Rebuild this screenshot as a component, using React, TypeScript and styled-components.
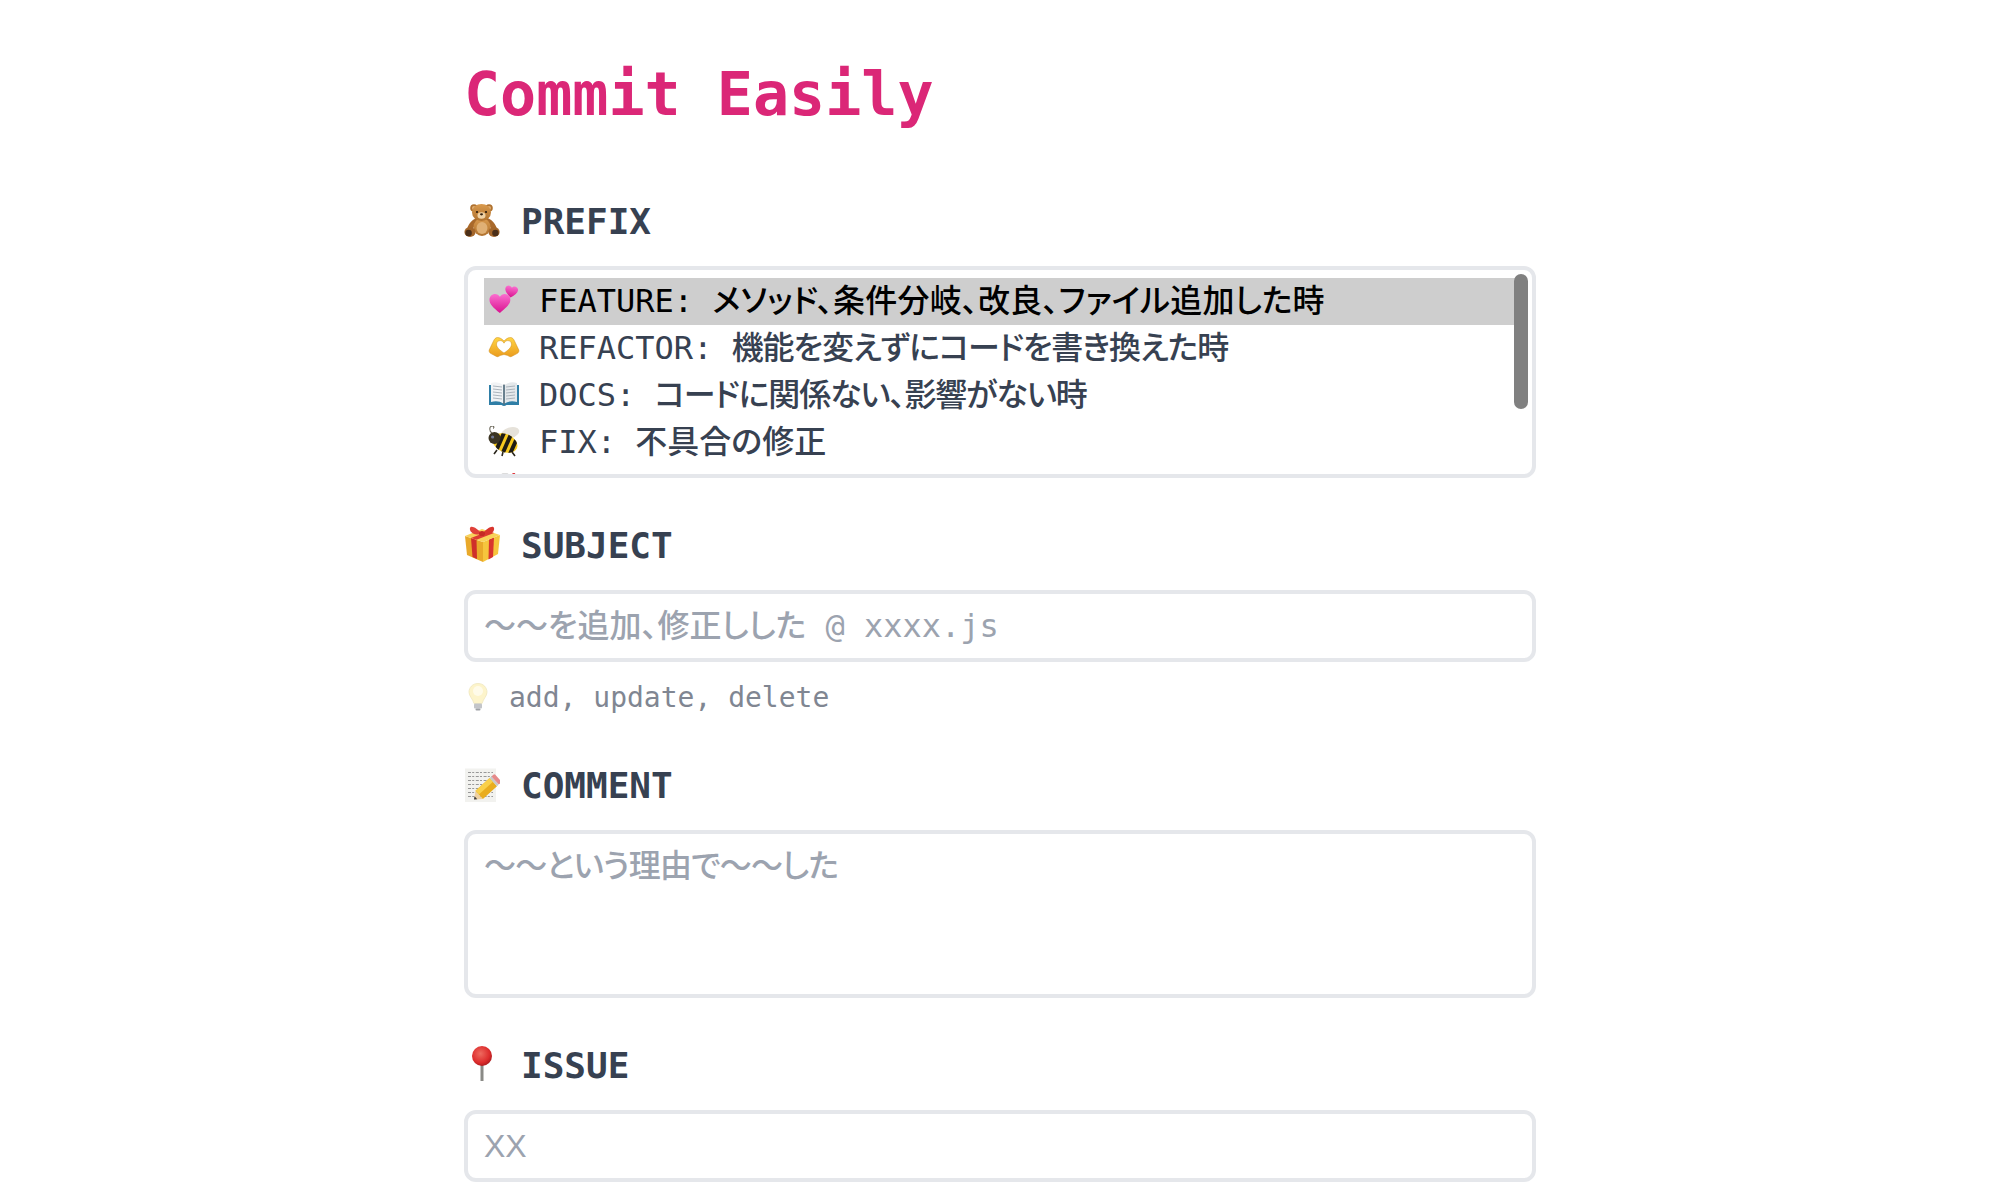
import * as React from 'react';
import styled, { createGlobalStyle } from 'styled-components';

const MONO = `'DejaVu Sans Mono', 'Noto Sans CJK JP', monospace`;

const GlobalStyle = createGlobalStyle`
	html, body {
		margin: 0;
		padding: 0;
		background: #fff;
		font-family: ${MONO};
		font-feature-settings: "palt";
	}
	* {
		box-sizing: border-box;
	}
`;

const Page = styled.main`
	width: 1072px;
	margin-left: 464px;
	padding: 54px 0 18px;
`;

const Title = styled.h1`
	margin: 0 0 63px;
	font-size: 60px;
	line-height: 80px;
	font-weight: 700;
	color: #db2777;
`;

const Field = styled.section`
	margin-bottom: 43px;
	&:last-child {
		margin-bottom: 0;
	}
`;

const Label = styled.label`
	display: flex;
	align-items: center;
	gap: 21px;
	height: 48px;
	margin-bottom: 21px;
	font-size: 36px;
	font-weight: 700;
	color: #374151;
`;

const Glyph = styled.svg<{ $size: number }>`
	flex: none;
	display: block;
	width: ${(p) => p.$size}px;
	height: ${(p) => p.$size}px;
	margin-top: -2px;
`;

const RowGlyph = styled(Glyph)`
	margin-top: -1px;
`;

const ListBox = styled.div`
	position: relative;
	height: 212px;
	padding: 8px 16px 0;
	border: 4px solid #e5e7eb;
	border-radius: 12px;
	overflow: hidden;
`;

const Option = styled.div<{ $selected?: boolean }>`
	display: flex;
	align-items: center;
	gap: 19px;
	height: 47px;
	padding-left: 4px;
	font-size: 32px;
	font-weight: 500;
	white-space: pre;
	color: ${(p) => (p.$selected ? '#000' : '#374151')};
	background: ${(p) => (p.$selected ? '#cecece' : 'transparent')};
`;

const OptionText = styled.span`
	margin-top: -7px;
`;

const OptionBody = styled.span<{ $track: number }>`
	letter-spacing: ${(p) => p.$track}px;
`;

const Thumb = styled.div`
	position: absolute;
	top: 4px;
	right: 4px;
	width: 14px;
	height: 135px;
	border-radius: 7px;
	background: #808080;
`;

const TextInput = styled.input<{ $sans?: boolean }>`
	display: block;
	width: 100%;
	height: 72px;
	padding: 0 16px;
	border: 4px solid #e5e7eb;
	border-radius: 12px;
	outline: none;
	font-family: ${(p) => (p.$sans ? `'Liberation Sans', sans-serif` : MONO)};
	font-feature-settings: "palt";
	font-size: 32px;
	font-weight: 500;
	color: #374151;
	&::placeholder {
		color: #9ca3af;
		opacity: 1;
	}
`;

const TextArea = styled.textarea`
	display: block;
	width: 100%;
	height: 168px;
	padding: 8px 16px;
	border: 4px solid #e5e7eb;
	border-radius: 12px;
	outline: none;
	resize: none;
	font-family: ${MONO};
	font-feature-settings: "palt";
	font-size: 32px;
	font-weight: 500;
	line-height: 48px;
	&::placeholder {
		color: #9ca3af;
		opacity: 1;
		letter-spacing: -0.85px;
	}
`;

const Hint = styled.p`
	display: flex;
	align-items: center;
	gap: 17px;
	margin: 16px 0 0;
	font-size: 28px;
	line-height: 40px;
	color: #6b7280;
	opacity: 0.85;
`;

const Bear = () => (
	<Glyph $size={36} viewBox="0 0 36 36" role="img" aria-label="teddy bear">
		<defs>
			<linearGradient id="fur" x1="0" y1="0" x2="0" y2="1">
				<stop offset="0" stopColor="#d99a4e" />
				<stop offset="1" stopColor="#b0722f" />
			</linearGradient>
		</defs>
		<circle cx="10" cy="6" r="3.8" fill="#b0722f" />
		<circle cx="25" cy="6" r="3.8" fill="#b0722f" />
		<circle cx="10" cy="6" r="2" fill="#dfae72" />
		<circle cx="25" cy="6" r="2" fill="#dfae72" />
		<ellipse cx="9" cy="22" rx="3" ry="7.5" transform="rotate(42 9 22)" fill="#a9692b" />
		<ellipse cx="27" cy="22" rx="3" ry="7.5" transform="rotate(-42 27 22)" fill="#a9692b" />
		<ellipse cx="18" cy="25" rx="8.5" ry="9" fill="url(#fur)" />
		<ellipse cx="18" cy="26" rx="5.5" ry="6" fill="#e0b075" />
		<ellipse cx="17.5" cy="10.5" rx="9.5" ry="8.5" fill="url(#fur)" />
		<ellipse cx="17.5" cy="13.5" rx="4" ry="3.2" fill="#efd2a6" />
		<ellipse cx="17.5" cy="12.3" rx="1.5" ry="1.1" fill="#33200f" />
		<circle cx="13" cy="10" r="1.1" fill="#2a1a0c" />
		<circle cx="22" cy="10" r="1.1" fill="#2a1a0c" />
		<ellipse cx="6" cy="30" rx="5.6" ry="5" fill="#a4662a" />
		<ellipse cx="30" cy="30" rx="5.6" ry="5" fill="#a4662a" />
		<ellipse cx="4.6" cy="31" rx="3.2" ry="3.2" fill="#4b2f19" />
		<ellipse cx="31.4" cy="31" rx="3.2" ry="3.2" fill="#4b2f19" />
	</Glyph>
);

const Gift = () => (
	<Glyph $size={36} viewBox="0 0 36 36" role="img" aria-label="gift">
		<polygon points="1,10 19,16 19,36 3,29" fill="#e9a92a" />
		<polygon points="19,16 36,9 34,28 19,36" fill="#f6c53d" />
		<polygon points="7,12 12.5,13.8 13,33 8.5,31" fill="#cf2f2a" />
		<polygon points="25,13.5 30,11.5 29,31 24.5,33.5" fill="#d8352e" />
		<polygon points="1,10 18,3 36,9 19,16" fill="#f8d25a" />
		<polygon points="7,12 25,5 30,7 12.5,13.8" fill="#dc3a33" />
		<path d="M18 8 C13 2 7 -1 6 2 C5 6 11 10 18 8Z" fill="#e0413a" />
		<path d="M18 8 C23 2 29 -1 30 2 C31 6 25 10 18 8Z" fill="#d8352e" />
		<ellipse cx="18" cy="7.5" rx="3" ry="2.6" fill="#c42a25" />
	</Glyph>
);

const Memo = () => (
	<Glyph $size={36} viewBox="0 -2.5 36 36" role="img" aria-label="memo">
		<rect x="1" y="0" width="31" height="33.5" fill="#f2f2ef" />
		{[4, 8, 12, 16, 20, 24, 28].map((y) => (
			<line key={y} x1="4" y1={y} x2="29" y2={y} stroke="#6d6d6d" strokeWidth="0.9" strokeDasharray="3 1.2 2 1.6" opacity="0.75" />
		))}
		<g transform="translate(10 31) rotate(-42)">
			<polygon points="0,0 7,-5.5 7,5.5" fill="#efd1a1" />
			<polygon points="0,0 2.6,-2 2.6,2" fill="#3a3a3a" />
			<rect x="7" y="-5.5" width="19" height="11" fill="#e9ad1f" />
			<rect x="7" y="-5.5" width="19" height="5" fill="#f9d04a" />
			<rect x="26" y="-5.5" width="2.4" height="11" fill="#c9c9c9" />
			<rect x="28.4" y="-5.5" width="4" height="11" rx="1.4" fill="#e68a8a" />
		</g>
	</Glyph>
);

const Pin = () => (
	<Glyph $size={36} viewBox="0 0 36 36" role="img" aria-label="round pushpin">
		<defs>
			<radialGradient id="ball" cx="0.42" cy="0.38" r="0.65">
				<stop offset="0" stopColor="#ee6a5f" />
				<stop offset="0.7" stopColor="#dd2c2c" />
				<stop offset="1" stopColor="#a91b1e" />
			</radialGradient>
		</defs>
		<rect x="16.5" y="18" width="3" height="17" fill="#8a8a86" />
		<circle cx="18" cy="10" r="10" fill="url(#ball)" />
	</Glyph>
);

const Bulb = () => (
	<Glyph $size={28} viewBox="0 0 28 28" role="img" aria-label="light bulb">
		<path d="M14 0.5 C8.5 0.5 5 4.6 5 9.2 C5 13.2 8.6 15.5 10 20.5 L18 20.5 C19.4 15.5 23 13.2 23 9.2 C23 4.6 19.5 0.5 14 0.5Z" fill="#fdf3c2" stroke="#ede3b4" strokeWidth="0.8" />
		<circle cx="14" cy="8" r="5" fill="#fffbe6" />
		<rect x="10" y="20.5" width="8" height="5" rx="1" fill="#b9bcc0" />
		<rect x="11.5" y="25.5" width="5" height="2" rx="1" fill="#8f9297" />
	</Glyph>
);

const HEART = 'M12 21.5 C5 16 1 12 1 7.5 C1 4 3.7 1.5 7 1.5 C9 1.5 11 2.6 12 4.5 C13 2.6 15 1.5 17 1.5 C20.3 1.5 23 4 23 7.5 C23 12 19 16 12 21.5Z';

const Hearts = () => (
	<RowGlyph $size={32} viewBox="0 0 32 32" role="img" aria-label="revolving hearts">
		<defs>
			<linearGradient id="pink" x1="0" y1="0" x2="0" y2="1">
				<stop offset="0" stopColor="#fb6fd0" />
				<stop offset="1" stopColor="#d9128f" />
			</linearGradient>
		</defs>
		<path d={HEART} fill="url(#pink)" transform="translate(0.5 7.5) scale(0.95)" />
		<path d={HEART} fill="url(#pink)" transform="translate(16.5 0) rotate(8 6 6) scale(0.58)" />
	</RowGlyph>
);

const Hands = () => (
	<RowGlyph $size={32} viewBox="0 1 32 32" role="img" aria-label="heart hands">
		<defs>
			<linearGradient id="gold" x1="0" y1="0" x2="0" y2="1">
				<stop offset="0" stopColor="#ffd544" />
				<stop offset="1" stopColor="#eb9c1e" />
			</linearGradient>
		</defs>
		<path
			fillRule="evenodd"
			fill="url(#gold)"
			stroke="#cf8a17"
			strokeWidth="0.5"
			d="M16 10 C14 8 12 6.5 9.5 6.5 C7.5 6.5 6.5 8 5.5 10 L1.2 19 C0.8 20.5 1.5 21.8 3 22.6 L8.5 25.5 C10 26 11 25.5 12 24.5 L16 23.5 L20 24.5 C21 25.5 22 26 23.5 25.5 L29 22.6 C30.5 21.8 31.2 20.5 30.8 19 L26.5 10 C25.5 8 24.5 6.5 22.5 6.5 C20 6.5 18 8 16 10Z M16 22 C11.5 19 8.5 16.2 8.5 13.2 C8.5 11 10.2 9.6 12.2 9.6 C13.8 9.6 15.2 10.6 16 12.2 C16.8 10.6 18.2 9.6 19.8 9.6 C21.8 9.6 23.5 11 23.5 13.2 C23.5 16.2 20.5 19 16 22Z"
		/>
	</RowGlyph>
);

const Book = () => (
	<RowGlyph $size={32} viewBox="0 0 32 32" role="img" aria-label="open book">
		<path d="M1 6 L1 26 L13.5 26 Q16 28 18.5 26 L31 26 L31 6Z" fill="#2f7ea6" />
		<path d="M3 4 Q10 2 15.5 6 L15.5 24.5 Q10 21 3 23Z" fill="#f1f3f5" />
		<path d="M29 4 Q22 2 16.5 6 L16.5 24.5 Q22 21 29 23Z" fill="#e4e8eb" />
		{[7, 10, 13, 16, 19].map((y) => (
			<g key={y} stroke="#a4adb5" strokeWidth="0.9">
				<line x1="5" y1={y} x2="14" y2={y + 1} />
				<line x1="18" y1={y + 1} x2="27" y2={y} />
			</g>
		))}
		<rect x="15.3" y="5.5" width="1.4" height="20" fill="#5b6a75" />
	</RowGlyph>
);

const Bee = () => (
	<RowGlyph $size={32} viewBox="0 1 32 32" role="img" aria-label="honeybee">
		<defs>
			<clipPath id="beeBody">
				<ellipse cx="0" cy="0" rx="13" ry="9" />
			</clipPath>
		</defs>
		<ellipse cx="22" cy="8" rx="9.5" ry="5.5" transform="rotate(-18 22 8)" fill="#e6e2da" />
		<path d="M4 8 C1 6 1 1.5 4 1 C6 0.8 6.5 3 5 3.4" fill="none" stroke="#6f6b5e" strokeWidth="1.1" />
		<path d="M9 25 L6 29 M15 27 L14 31 M24 27 L27 31" stroke="#2a261c" strokeWidth="1.6" />
		<g transform="translate(17 18) rotate(24)">
			<ellipse cx="0" cy="0" rx="13" ry="9" fill="#f7c91e" />
			<g clipPath="url(#beeBody)" fill="#1f1c15">
				<rect x="-7" y="-10" width="4" height="20" />
				<rect x="0" y="-10" width="4" height="20" />
				<rect x="7" y="-10" width="4" height="20" />
			</g>
		</g>
		<circle cx="6.5" cy="13" r="6" fill="#3b3422" />
		<circle cx="4.6" cy="12" r="1.6" fill="#6d7590" />
	</RowGlyph>
);

const Tag = () => (
	<RowGlyph $size={32} viewBox="0 3 32 32" role="img" aria-label="tag">
		<polygon points="17,1 11,6 23,6" fill="#dcdcdc" />
		<line x1="27" y1="1" x2="25" y2="5" stroke="#e0383e" strokeWidth="2.4" />
	</RowGlyph>
);

const options = [
	{ icon: <Hearts />, prefix: 'FEATURE: ', body: 'メソッド、条件分岐、改良、ファイル追加した時', track: 0.2 },
	{ icon: <Hands />, prefix: 'REFACTOR: ', body: '機能を変えずにコードを書き換えた時', track: -1.1 },
	{ icon: <Book />, prefix: 'DOCS: ', body: 'コードに関係ない、影響がない時', track: -1.1 },
	{ icon: <Bee />, prefix: 'FIX: ', body: '不具合の修正', track: 0 },
	{ icon: <Tag />, prefix: 'TEST: ', body: 'テストコード', track: 0 },
];

const App = () => {
	return (
		<>
			<GlobalStyle />
			<Page>
				<Title>Commit Easily</Title>
				<Field>
					<Label><Bear />PREFIX</Label>
					<ListBox>
						{options.map((o, i) => (
							<Option key={o.prefix} $selected={i === 0}>
								{o.icon}
								<OptionText>
									{o.prefix}<OptionBody $track={o.track}>{o.body}</OptionBody>
								</OptionText>
							</Option>
						))}
						<Thumb />
					</ListBox>
				</Field>
				<Field>
					<Label><Gift />SUBJECT</Label>
					<TextInput placeholder="〜〜を追加、修正しした @ xxxx.js" />
					<Hint><Bulb />add, update, delete</Hint>
				</Field>
				<Field>
					<Label><Memo />COMMENT</Label>
					<TextArea placeholder="〜〜という理由で〜〜した" />
				</Field>
				<Field>
					<Label><Pin />ISSUE</Label>
					<TextInput $sans placeholder="XX" />
				</Field>
			</Page>
		</>
	);
};

export default App;
